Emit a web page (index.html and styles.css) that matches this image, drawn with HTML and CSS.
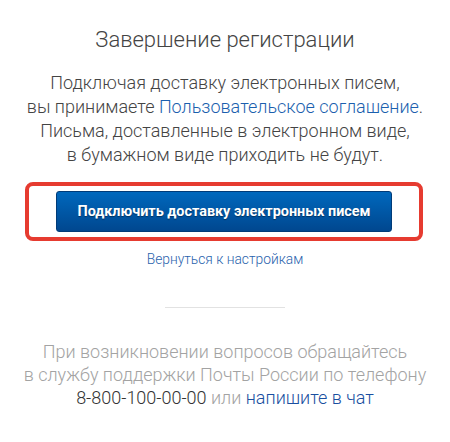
FILE: index.html
```html
<!DOCTYPE html>
<html lang="ru">
<head>
<meta charset="utf-8">
<link rel="stylesheet" href="styles.css">
</head>
<body>
<div class="page">
  <h1 class="title">Завершение регистрации</h1>
  <p class="lead">Подключая доставку электронных писем,<br>вы принимаете <a class="link" href="#">Пользовательское соглашение</a>.<br>Письма, доставленные в электронном виде,<br>в бумажном виде приходить не будут.</p>
  <div class="highlight">
    <button class="btn">Подключить доставку электронных писем</button>
  </div>
  <a class="back" href="#">Вернуться к настройкам</a>
  <hr class="divider">
  <p class="help">При возникновении вопросов обращайтесь<br>в службу поддержки Почты России по телефону<br><span class="phone">8-800-100-00-00</span> или <a class="link" href="#">напишите в чат</a></p>
</div>
</body>
</html>
```
FILE: styles.css
```css
html, body {
  margin: 0;
  padding: 0;
  background: #fff;
}
.page {
  width: 450px;
  display: flex;
  flex-direction: column;
  align-items: center;
  font-family: Roboto, "Noto Sans", sans-serif;
  text-align: center;
}
.title {
  margin: 26px 0 0;
  font-size: 22px;
  line-height: 28px;
  font-weight: 300;
  color: #444;
}
.lead {
  margin: 17px 0 0;
  font-size: 18px;
  line-height: 24px;
  font-weight: 300;
  color: #444;
}
.link {
  color: #1b5fae;
  text-decoration: none;
}
.highlight {
  margin-top: 15px;
  margin-right: 2px;
  width: 390px;
  height: 51px;
  border: 4px solid #e63b30;
  border-radius: 8px;
  display: flex;
  align-items: center;
  justify-content: center;
}
.btn {
  width: 336px;
  height: 41px;
  border: 1px solid #003b78;
  border-radius: 3px;
  background: linear-gradient(#0068bd, #00478f);
  color: #fff;
  font-family: Roboto, sans-serif;
  font-weight: 700;
  font-size: 14.4px;
  text-shadow: 0 1px 1px rgba(0,0,0,0.4);
  padding: 0;
}
.back {
  margin-top: 10px;
  font-size: 13.8px;
  line-height: 17px;
  color: #2a63ad;
  text-decoration: none;
  font-weight: 300;
}
.divider {
  margin: 39px 0 0;
  width: 120px;
  border: 0;
  border-top: 1px solid #e2e2e2;
  height: 0;
}
.help {
  margin: 32px 0 0;
  font-size: 18px;
  line-height: 23px;
  font-weight: 300;
  color: #a3a3a3;
}
.phone {
  color: #333;
}
.help .link {
  color: #1a4fa0;
}
```
